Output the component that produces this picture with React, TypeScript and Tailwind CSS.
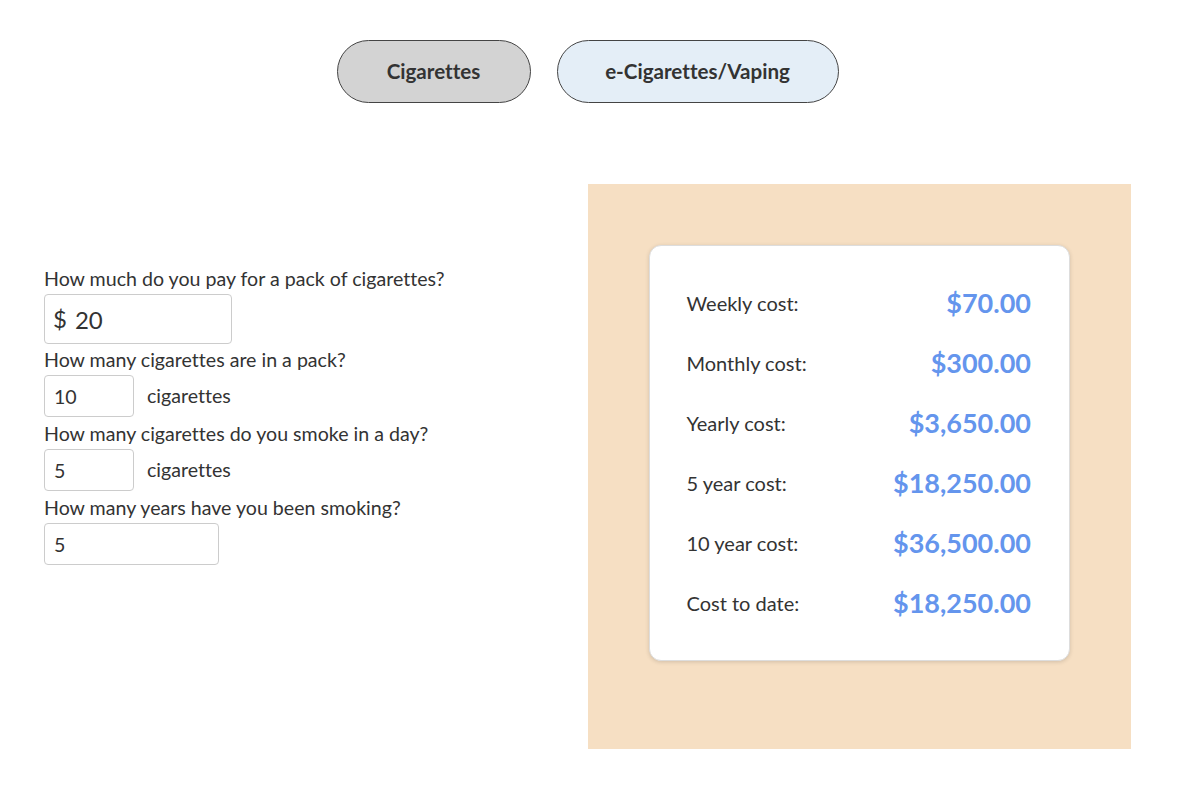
import React from 'react';

const costs = [
  { label: 'Weekly cost:', value: '$70.00' },
  { label: 'Monthly cost:', value: '$300.00' },
  { label: 'Yearly cost:', value: '$3,650.00' },
  { label: '5 year cost:', value: '$18,250.00' },
  { label: '10 year cost:', value: '$36,500.00' },
  { label: 'Cost to date:', value: '$18,250.00' },
];

export default function App() {
  return (
    <div className="min-h-[786px] bg-white text-[#333] font-['Lato','Liberation_Sans',sans-serif] [font-variant-ligatures:none]">
      <div className="pl-[44px] pr-[48px] pt-[40px]">
        <div className="flex justify-center gap-[26px]">
          <button className="w-[194px] h-[63px] rounded-full border border-[#444] bg-[#d3d3d3] text-[20.6px] font-bold text-[#333]">
            Cigarettes
          </button>
          <button className="w-[282px] h-[63px] rounded-full border border-[#444] bg-[#e4eef7] text-[20.6px] font-bold text-[#333]">
            e-Cigarettes/Vaping
          </button>
        </div>

        <div className="mt-[81px] grid grid-cols-2">
          <div className="pt-[84px] text-[19.6px] leading-[22px]">
            <p className="mb-[4px]">How much do you pay for a pack of cigarettes?</p>
            <div className="w-[188px] h-[50px] rounded-[4px] border border-[#ccc] flex items-center px-[8px] text-[24px]">
              <span>$</span>
              <input
                defaultValue="20"
                className="ml-[8px] w-full outline-none bg-transparent"
              />
            </div>

            <p className="mt-[5px] mb-[4px]">How many cigarettes are in a pack?</p>
            <div className="flex items-center">
              <input
                defaultValue="10"
                className="w-[90px] h-[42px] rounded-[4px] border border-[#ccc] px-[9px] outline-none"
              />
              <span className="ml-[13px]">cigarettes</span>
            </div>

            <p className="mt-[6px] mb-[4px]">How many cigarettes do you smoke in a day?</p>
            <div className="flex items-center">
              <input
                defaultValue="5"
                className="w-[90px] h-[42px] rounded-[4px] border border-[#ccc] px-[9px] outline-none"
              />
              <span className="ml-[13px]">cigarettes</span>
            </div>

            <p className="mt-[6px] mb-[4px]">How many years have you been smoking?</p>
            <input
              defaultValue="5"
              className="w-[175px] h-[42px] rounded-[4px] border border-[#ccc] px-[9px] outline-none"
            />
          </div>

          <div className="bg-[#f6dfc3] pt-[61px] pb-[88px] px-[61px]">
            <div className="bg-white rounded-[12px] border border-[#ddd] shadow-[0_1px_4px_rgba(0,0,0,0.15)] pt-[27px] pb-[27px] pl-[37px] pr-[38px]">
              {costs.map((c) => (
                <div key={c.label} className="h-[60px] flex items-center justify-between">
                  <span className="text-[20px]">{c.label}</span>
                  <span className="text-[27px] font-bold text-[#6495ed]">{c.value}</span>
                </div>
              ))}
            </div>
          </div>
        </div>
      </div>
    </div>
  );
}
